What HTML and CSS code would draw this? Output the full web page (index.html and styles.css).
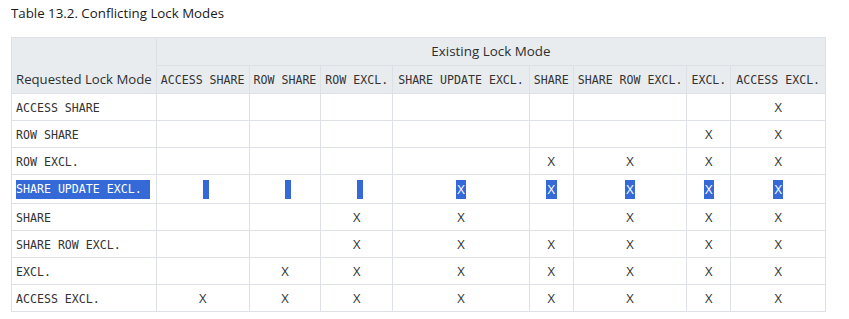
FILE: index.html
```html
<!DOCTYPE html>
<html lang="en">
<head>
    <meta charset="UTF-8">
    <meta name="viewport" content="width=device-width, initial-scale=1.0">
    <title>Conflicting Lock Modes</title>
    <link rel="stylesheet" href="styles.css">
</head>
<body>
    <div class="table">
        <p class="title">Table 13.2. Conflicting Lock Modes</p>
        <table class="locks">
            <thead>
                <tr>
                    <th rowspan="2" class="req">Requested Lock Mode</th>
                    <th colspan="8">Existing Lock Mode</th>
                </tr>
                <tr>
                    <th><code>ACCESS SHARE</code></th>
                    <th><code>ROW SHARE</code></th>
                    <th><code>ROW EXCL.</code></th>
                    <th class="wide"><code>SHARE UPDATE EXCL.</code></th>
                    <th><code>SHARE</code></th>
                    <th><code>SHARE ROW EXCL.</code></th>
                    <th><code>EXCL.</code></th>
                    <th class="wide"><code>ACCESS EXCL.</code></th>
                </tr>
            </thead>
            <tbody>
                <tr>
                    <td><code>ACCESS SHARE</code></td>
                    <td></td><td></td><td></td><td></td><td></td><td></td><td></td>
                    <td>X</td>
                </tr>
                <tr>
                    <td><code>ROW SHARE</code></td>
                    <td></td><td></td><td></td><td></td><td></td><td></td>
                    <td>X</td><td>X</td>
                </tr>
                <tr>
                    <td><code>ROW EXCL.</code></td>
                    <td></td><td></td><td></td><td></td>
                    <td>X</td><td>X</td><td>X</td><td>X</td>
                </tr>
                <!-- this row is selected with the mouse -->
                <tr>
                    <td><code class="sel tail">SHARE UPDATE EXCL.</code></td>
                    <td><span class="sel gap"></span></td>
                    <td><span class="sel gap"></span></td>
                    <td><span class="sel gap"></span></td>
                    <td><span class="sel">X</span></td>
                    <td><span class="sel">X</span></td>
                    <td><span class="sel">X</span></td>
                    <td><span class="sel">X</span></td>
                    <td><span class="sel">X</span></td>
                </tr>
                <tr>
                    <td><code>SHARE</code></td>
                    <td></td><td></td>
                    <td>X</td><td>X</td><td></td><td>X</td><td>X</td><td>X</td>
                </tr>
                <tr>
                    <td><code>SHARE ROW EXCL.</code></td>
                    <td></td><td></td>
                    <td>X</td><td>X</td><td>X</td><td>X</td><td>X</td><td>X</td>
                </tr>
                <tr>
                    <td><code>EXCL.</code></td>
                    <td></td>
                    <td>X</td><td>X</td><td>X</td><td>X</td><td>X</td><td>X</td><td>X</td>
                </tr>
                <tr>
                    <td><code>ACCESS EXCL.</code></td>
                    <td>X</td><td>X</td><td>X</td><td>X</td><td>X</td><td>X</td><td>X</td><td>X</td>
                </tr>
            </tbody>
        </table>
    </div>
</body>
</html>
```

FILE: styles.css
```css
body {
    margin: 0;
    font-family: "Open Sans", sans-serif;
    font-size: 14px;
    color: #333;
    background-color: #fff;
}
.table {
    padding: 0 10px;
}
.title {
    margin: 4px 0 14px 1px;
    font-size: 13.3px;
    line-height: 19px;
    color: #1a1a1a;
}
.locks {
    margin-left: 1px;
    border-collapse: collapse;
}
.locks th,
.locks td {
    border: 1px solid #dde0e4;
    padding: 4px 4px;
    white-space: nowrap;
}
.locks th {
    height: 19px;
    background-color: #e9ecef;
    font-size: 13.4px;
    font-weight: normal;
    line-height: 19px;
    color: #2e2e2e;
}
.locks th.req {
    height: auto;
    font-size: 13.2px;
    vertical-align: bottom;
    text-align: left;
}
.locks th.wide {
    padding: 4px 5px;
}
.locks td {
    height: 18px;
    line-height: 18px;
    text-align: center;
    font-size: 13px;
}
.locks td:first-child {
    text-align: left;
}
code {
    font-family: "DejaVu Sans Mono", monospace;
    font-size: 11.6px;
    font-weight: normal;
    line-height: 1;
    color: #333;
}
/* mouse selection over one row */
.sel {
    display: inline-block;
    height: 19px;
    line-height: 19px;
    padding: 0 1.5px;
    vertical-align: middle;
    background-color: #3469d7;
    color: #fff;
}
.sel.tail {
    padding: 0 8px 0 0;
}
.sel.gap {
    width: 6px;
    padding: 0;
    margin-left: 6px;
}
```
